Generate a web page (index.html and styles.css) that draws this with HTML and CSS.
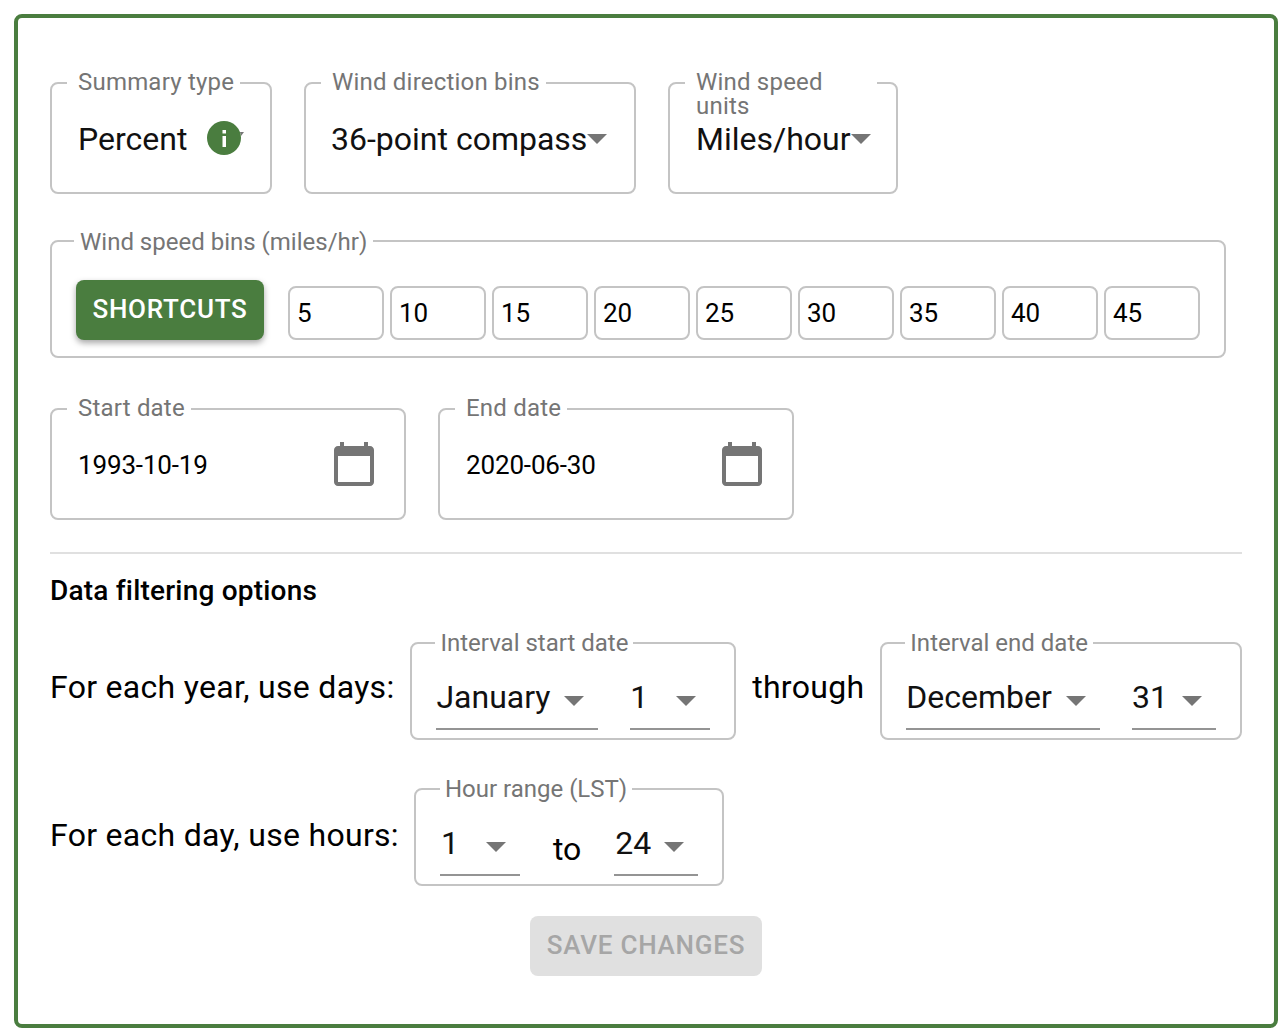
FILE: index.html
```html
<!doctype html>
<html>
<head>
<meta charset="utf-8">
<title>Wind rose options</title>
<link rel="stylesheet" href="styles.css">
</head>

<body>
	<div class="panel">
		<div class="row top-row">
			<fieldset class="box summary">
				<legend>Summary type</legend>
				<div class="value-line">
					<span class="value">Percent</span>
					<svg class="info" width="44" height="36" viewBox="0 0 44 36">
						<path d="M34 12l4 0-3 4z" fill="#757575"/>
						<circle cx="18" cy="18" r="17" fill="#4a7d3f"/>
						<rect x="16.5" y="16" width="3.5" height="11" fill="#fff"/>
						<rect x="16.5" y="10" width="3.5" height="3.5" fill="#fff"/>
					</svg>
				</div>
			</fieldset>
			<fieldset class="box direction">
				<legend>Wind direction bins</legend>
				<div class="value-line">
					<span class="value">36-point compass</span>
					<span class="arrow"></span>
				</div>
			</fieldset>
			<fieldset class="box units">
				<legend>Wind speed units</legend>
				<div class="value-line">
					<span class="value">Miles/hour</span>
					<span class="arrow"></span>
				</div>
			</fieldset>
		</div>

		<fieldset class="box bins">
			<legend>Wind speed bins (miles/hr)</legend>
			<div class="bins-line">
				<button class="btn shortcuts" type="button">Shortcuts</button>
				<div class="bin-list">
					<div class="bin">5</div>
					<div class="bin">10</div>
					<div class="bin">15</div>
					<div class="bin">20</div>
					<div class="bin">25</div>
					<div class="bin">30</div>
					<div class="bin">35</div>
					<div class="bin">40</div>
					<div class="bin">45</div>
				</div>
			</div>
		</fieldset>

		<div class="row date-row">
			<fieldset class="box date">
				<legend>Start date</legend>
				<div class="date-line">
					<span class="date-text">1993-10-19</span>
					<svg class="cal" width="48" height="48" viewBox="0 0 24 24"><path d="M20 3h-1V1h-2v2H7V1H5v2H4c-1.1 0-2 .9-2 2v16c0 1.1.9 2 2 2h16c1.1 0 2-.9 2-2V5c0-1.1-.9-2-2-2zm0 18H4V8h16v13z"/></svg>
				</div>
			</fieldset>
			<fieldset class="box date">
				<legend>End date</legend>
				<div class="date-line">
					<span class="date-text">2020-06-30</span>
					<svg class="cal" width="48" height="48" viewBox="0 0 24 24"><path d="M20 3h-1V1h-2v2H7V1H5v2H4c-1.1 0-2 .9-2 2v16c0 1.1.9 2 2 2h16c1.1 0 2-.9 2-2V5c0-1.1-.9-2-2-2zm0 18H4V8h16v13z"/></svg>
				</div>
			</fieldset>
		</div>

		<hr class="rule">
		<h2 class="heading">Data filtering options</h2>

		<div class="row filter-row year-row">
			<span class="row-label">For each year, use days:</span>
			<fieldset class="box range">
				<legend>Interval start date</legend>
				<div class="select-line">
					<div class="select w162"><span>January</span><span class="arrow"></span></div>
					<div class="select w80"><span>1</span><span class="arrow"></span></div>
				</div>
			</fieldset>
			<span class="row-label">through</span>
			<fieldset class="box range">
				<legend>Interval end date</legend>
				<div class="select-line">
					<div class="select w194"><span>December</span><span class="arrow"></span></div>
					<div class="select w84"><span>31</span><span class="arrow"></span></div>
				</div>
			</fieldset>
		</div>

		<div class="row filter-row day-row">
			<span class="row-label">For each day, use hours:</span>
			<fieldset class="box range">
				<legend>Hour range (LST)</legend>
				<div class="select-line">
					<div class="select w80"><span>1</span><span class="arrow"></span></div>
					<span class="to">to</span>
					<div class="select w84"><span>24</span><span class="arrow"></span></div>
				</div>
			</fieldset>
		</div>

		<div class="save-line">
			<button class="btn save" type="button" disabled>Save changes</button>
		</div>
	</div>
</body>
</html>
```

FILE: styles.css
```css
*{
	box-sizing:border-box;
}
body{
	margin:0;
	background:#fff;
	font-family:Roboto,"Liberation Sans",sans-serif;
	color:#111;
}
.panel{
	width:1264px;
	height:1014px;
	margin:14px 0 0 14px;
	padding:51px 32px 0;
	border:4px solid #4a7d3f;
	border-radius:8px;
}
.row{
	display:flex;
}
.box{
	margin:0;
	padding:0;
	min-width:0;
	border:2px solid #c4c4c4;
	border-radius:8px;
}
.box legend{
	font-size:24px;
	line-height:26px;
	color:#757575;
	margin-left:15px;
	padding:0 6px 2px 11px;
	letter-spacing:.2px;
}

/* top row */
.top-row{
	gap:32px;
}
.value-line{
	display:flex;
	align-items:center;
	padding:23px 0 34px 26px;
}
.value{
	font-size:32px;
	line-height:38px;
}
.arrow{
	width:0;
	height:0;
	border-left:10px solid transparent;
	border-right:10px solid transparent;
	border-top:10px solid #757575;
}
.summary{
	width:222px;
}
.info{
	margin:0 0 2px 19px;
	flex:none;
}
.direction{
	width:332px;
}
.direction .value-line{
	padding-left:25px;
}
.units{
	width:230px;
}
.box.units legend{
	width:192px;
	height:28px;
	line-height:24px;
	padding-top:1px;
	padding-bottom:0;
}

/* speed bins */
.bins{
	width:1176px;
	margin-top:33px;
}
.box.bins legend{
	margin-left:22px;
	padding:2px 6px 0;
	letter-spacing:0;
}
.bins-line{
	display:flex;
	align-items:flex-end;
	gap:24px;
	padding:25px 24px 16px;
}
.bin-list{
	display:flex;
	gap:6px;
}
.bin{
	width:96px;
	height:54px;
	padding-left:7px;
	border:2px solid #c4c4c4;
	border-radius:8px;
	font-size:26px;
	line-height:50px;
	color:#000;
}
.btn{
	height:60px;
	padding:0 0 2px;
	border:0;
	border-radius:8px;
	font-family:inherit;
	font-size:26px;
	font-weight:500;
	letter-spacing:.75px;
	text-transform:uppercase;
}
.shortcuts{
	width:188px;
	flex:none;
	background:#4a7d3f;
	color:#fff;
	box-shadow:0 3px 6px rgba(0,0,0,.35);
}

/* dates */
.date-row{
	gap:32px;
	margin-top:37px;
}
.date{
	width:356px;
}
.date-line{
	display:flex;
	justify-content:space-between;
	align-items:center;
	padding:17px 26px 30px;
}
.date-text{
	margin-top:2px;
	font-size:26px;
	letter-spacing:-.15px;
	color:#000;
}
.cal{
	fill:#757575;
}
.rule{
	height:2px;
	margin:32px 0 0;
	border:0;
	background:#e0e0e0;
}
.heading{
	margin:20px 0 0;
	font-size:28px;
	line-height:34px;
	font-weight:500;
	letter-spacing:.2px;
	color:#000;
}

/* filter rows */
.filter-row{
	align-items:center;
	gap:16px;
}
.year-row{
	margin-top:21px;
}
.day-row{
	gap:15px;
	margin-top:35px;
}
.row-label{
	flex:none;
	white-space:nowrap;
	font-size:32px;
	line-height:38px;
	letter-spacing:.3px;
	color:#000;
	padding-top:4px;
}
.day-row .row-label{
	padding-top:8px;
}
.box.range legend{
	margin-left:23px;
	padding:1px 5px;
	letter-spacing:0;
}
.day-row .box.range legend{
	margin-left:24px;
}
.select-line{
	display:flex;
	gap:32px;
	padding:21px 24px 8px;
}
.select{
	display:flex;
	justify-content:space-between;
	height:52px;
	padding-right:14px;
	border-bottom:2px solid #949494;
	font-size:32px;
	line-height:38px;
}
.day-row .select>span:first-child{
	padding-left:1px;
}
.select .arrow{
	margin-top:18px;
}
.w80{
	width:80px;
}
.w84{
	width:84px;
}
.w162{
	width:162px;
}
.w194{
	width:194px;
}
.to{
	font-size:32px;
	line-height:38px;
	color:#000;
	margin:6px 1px 0;
}
.save-line{
	display:flex;
	justify-content:center;
	margin-top:30px;
}
.save{
	width:232px;
	background:#e0e0e0;
	color:#a6a6a6;
}
```
